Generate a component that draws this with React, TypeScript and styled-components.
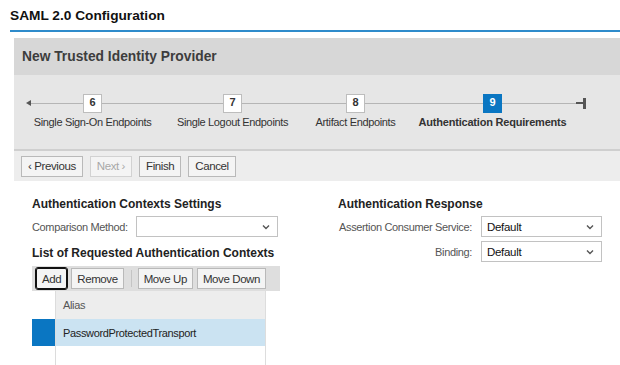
import React from 'react';
import styled, { createGlobalStyle } from 'styled-components';

const Global = createGlobalStyle`
  html, body {
    margin: 0;
    padding: 0;
    background: #fff;
    font-family: "Liberation Sans", Arial, sans-serif;
    color: #333;
  }
`;

const Page = styled.div`
  width: 620px;
  height: 365px;
  overflow: hidden;
  padding-top: 7px;
  box-sizing: border-box;
`;

const PageTitle = styled.h1`
  margin: 0 0 0 10px;
  font-size: 13.7px;
  font-weight: bold;
  color: #111;
  line-height: 18px;
  padding-bottom: 5px;
  border-bottom: 2px solid #2e8bcb;
`;

const Panel = styled.div`
  margin: 6px 0 0 14px;
`;

const PanelHeader = styled.div`
  height: 37px;
  background: #d7d7d7;
  display: flex;
  align-items: center;
  padding-left: 8px;
  font-size: 13.8px;
  font-weight: bold;
  color: #3d3d3d;
`;

const Wizard = styled.div`
  background: #e6e6e6;
  height: 74px;
  border-bottom: 2px solid #cfcfcf;
`;

const Track = styled.div`
  display: flex;
  align-items: flex-start;
  padding: 19px 0 0 12px;
`;

const Rail = styled.div<{ $w: number }>`
  width: ${(p) => p.$w}px;
  height: 1px;
  background: #b5b5b5;
  margin-top: 9px;
  flex: none;
`;

const StartCap = styled.div`
  width: 0;
  height: 0;
  margin-top: 6px;
  border-top: 3.5px solid transparent;
  border-bottom: 3.5px solid transparent;
  border-right: 5px solid #555;
  flex: none;
`;

const EndCap = styled.div`
  width: 3px;
  height: 11px;
  background: #555;
  margin-top: 4px;
  flex: none;
`;

const EndStub = styled.div`
  width: 7px;
  height: 2px;
  background: #555;
  margin-top: 8px;
  flex: none;
`;

const Step = styled.div`
  position: relative;
  flex: none;
  width: 19px;
  display: flex;
  justify-content: center;
`;

const StepBox = styled.div<{ $active?: boolean }>`
  width: 19px;
  height: 19px;
  box-sizing: border-box;
  background: ${(p) => (p.$active ? '#0a76c2' : '#fff')};
  border: 1px solid ${(p) => (p.$active ? '#0a76c2' : '#bdbdbd')};
  color: ${(p) => (p.$active ? '#fff' : '#333')};
  font-size: 11px;
  font-weight: bold;
  text-align: center;
  line-height: 14px;
`;

const StepLabel = styled.div<{ $active?: boolean }>`
  position: absolute;
  top: 22px;
  white-space: nowrap;
  font-size: 11px;
  letter-spacing: ${(p) => (p.$active ? '-0.2px' : '-0.35px')};
  color: #333;
  font-weight: ${(p) => (p.$active ? 'bold' : 'normal')};
`;

const ButtonBar = styled.div`
  background: #ededed;
  height: 30px;
  display: flex;
  align-items: center;
  gap: 7px;
  padding-left: 7px;
`;

const Button = styled.button<{ $disabled?: boolean; $focus?: boolean }>`
  font-family: inherit;
  font-size: 11.5px;
  letter-spacing: -0.4px;
  white-space: nowrap;
  height: 21px;
  padding: 0 5px;
  background: #f4f4f4;
  border: 1px solid #b9b9b9;
  outline: ${(p) => (p.$focus ? '1px solid #111' : 'none')};
  border-radius: ${(p) => (p.$focus ? '2px' : '0')};
  color: ${(p) => (p.$disabled ? '#a8a8a8' : '#333')};
  border-color: ${(p) => (p.$disabled ? '#d2d2d2' : p.$focus ? '#111' : '#b9b9b9')};
  cursor: default;
`;

const NavButton = styled(Button)`
  padding: 0 6px;
`;

const Content = styled.div`
  display: flex;
  padding: 15px 0 0 32px;
`;

const Column = styled.div<{ $w: number }>`
  width: ${(p) => p.$w}px;
  flex: none;
`;

const SectionTitle = styled.h2`
  margin: 0;
  font-size: 12px;
  font-weight: bold;
  color: #222;
  line-height: 16px;
`;

const FieldRow = styled.div<{ $labelW?: number }>`
  display: flex;
  align-items: center;
  margin-top: 4px;
  font-size: 11px;
  letter-spacing: -0.35px;
  color: #555;
  white-space: nowrap;
  label {
    width: ${(p) => p.$labelW ?? 104}px;
    text-align: ${(p) => (p.$labelW ? 'right' : 'left')};
    padding-right: ${(p) => (p.$labelW ? '9px' : '0')};
    box-sizing: border-box;
    flex: none;
  }
`;

const Select = styled.div<{ $w: number }>`
  width: ${(p) => p.$w}px;
  height: 21px;
  box-sizing: border-box;
  border: 1px solid #c2c2c2;
  background: #fff;
  display: flex;
  align-items: center;
  justify-content: space-between;
  padding: 0 7px 0 5px;
  font-size: 11.5px;
  letter-spacing: -0.3px;
  color: #111;
`;

const Chevron = () => (
  <svg width="8" height="6" viewBox="0 0 8 6">
    <path d="M1 1.5 L4 4.5 L7 1.5" fill="none" stroke="#555" strokeWidth="1.4" />
  </svg>
);

const ListTitle = styled(SectionTitle)`
  margin-top: 8px;
`;

const Table = styled.div`
  margin-top: 5px;
  width: 248px;
`;

const TableToolbar = styled.div`
  background: #dedede;
  height: 25px;
  display: flex;
  align-items: center;
  padding-left: 4px;
  gap: 4px;
`;

const ToolSep = styled.div`
  width: 1px;
  height: 17px;
  background: #c4c4c4;
  margin: 0 2px 0 3px;
`;

const Grid = styled.div`
  width: 233px;
  border-right: 1px solid #ddd;
`;

const Row = styled.div<{ $head?: boolean }>`
  display: flex;
  height: ${(p) => (p.$head ? 28 : 27)}px;
  font-size: 11px;
  letter-spacing: -0.35px;
  color: ${(p) => (p.$head ? '#555' : '#222')};
`;

const SelCell = styled.div<{ $sel?: boolean }>`
  width: 23px;
  flex: none;
  background: ${(p) => (p.$sel ? '#0a76c2' : '#fff')};
`;

const Cell = styled.div<{ $sel?: boolean; $head?: boolean }>`
  flex: 1;
  display: flex;
  align-items: center;
  padding-left: 7px;
  background: ${(p) => (p.$sel ? '#cbe3f2' : p.$head ? '#ededed' : '#fff')};
  border-left: 1px solid #dcdcdc;
`;

const steps = [
  { n: 6, label: 'Single Sign-On Endpoints', before: 52 },
  { n: 7, label: 'Single Logout Endpoints', before: 121 },
  { n: 8, label: 'Artifact Endpoints', before: 104 },
  { n: 9, label: 'Authentication Requirements', before: 118, active: true },
];

export default function App() {
  return (
    <Page>
      <Global />
      <PageTitle>SAML 2.0 Configuration</PageTitle>
      <Panel>
        <PanelHeader>New Trusted Identity Provider</PanelHeader>
        <Wizard>
          <Track>
            <StartCap />
            {steps.map((s) => (
              <React.Fragment key={s.n}>
                <Rail $w={s.before} />
                <Step>
                  <StepBox $active={s.active}>{s.n}</StepBox>
                  <StepLabel $active={s.active}>{s.label}</StepLabel>
                </Step>
              </React.Fragment>
            ))}
            <Rail $w={74} />
            <EndStub />
            <EndCap />
          </Track>
        </Wizard>
        <ButtonBar>
          <NavButton>‹ Previous</NavButton>
          <NavButton $disabled>Next ›</NavButton>
          <NavButton>Finish</NavButton>
          <NavButton>Cancel</NavButton>
        </ButtonBar>
      </Panel>
      <Content>
        <Column $w={306}>
          <SectionTitle>Authentication Contexts Settings</SectionTitle>
          <FieldRow>
            <label>Comparison Method:</label>
            <Select $w={142}>
              <span />
              <Chevron />
            </Select>
          </FieldRow>
          <ListTitle>List of Requested Authentication Contexts</ListTitle>
          <Table>
            <TableToolbar>
              <Button $focus>Add</Button>
              <Button>Remove</Button>
              <ToolSep />
              <Button>Move Up</Button>
              <Button>Move Down</Button>
            </TableToolbar>
            <Grid>
              <Row $head>
                <SelCell />
                <Cell $head>Alias</Cell>
              </Row>
              <Row>
                <SelCell $sel />
                <Cell $sel>PasswordProtectedTransport</Cell>
              </Row>
              <Row>
                <SelCell />
                <Cell />
              </Row>
            </Grid>
          </Table>
        </Column>
        <Column $w={270}>
          <SectionTitle>Authentication Response</SectionTitle>
          <FieldRow $labelW={143}>
            <label>Assertion Consumer Service:</label>
            <Select $w={121}>
              <span>Default</span>
              <Chevron />
            </Select>
          </FieldRow>
          <FieldRow $labelW={143}>
            <label>Binding:</label>
            <Select $w={121}>
              <span>Default</span>
              <Chevron />
            </Select>
          </FieldRow>
        </Column>
      </Content>
    </Page>
  );
}
